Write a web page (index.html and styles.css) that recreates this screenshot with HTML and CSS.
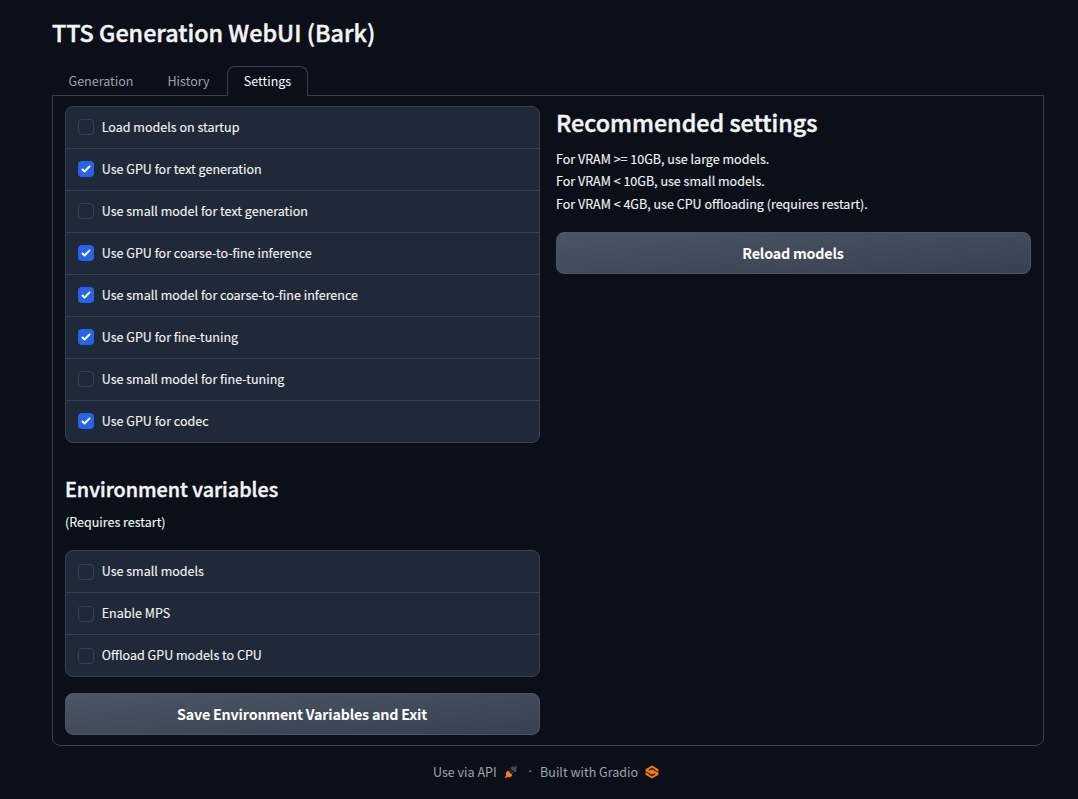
FILE: index.html
```
<!DOCTYPE html>
<html lang="en">
<head>
<meta charset="utf-8">
<title>TTS Generation WebUI (Bark)</title>
<link rel="stylesheet" href="styles.css">
</head>
<body>
<main class="app">
  <h1 class="title">TTS Generation WebUI (Bark)</h1>
  <nav class="tabs">
    <button class="tab tab-generation">Generation</button>
    <button class="tab tab-history">History</button>
    <button class="tab tab-settings selected">Settings</button>
  </nav>
  <section class="panel">
    <div class="column">
      <div class="group models">
        <label class="row"><span class="box"></span><span class="label">Load models on startup</span></label>
        <label class="row"><span class="box checked"><svg viewBox="0 0 16 16"><path d="M12.207 4.793a1 1 0 0 1 0 1.414l-5 5a1 1 0 0 1-1.414 0l-2-2a1 1 0 0 1 1.414-1.414L6.5 9.086l4.293-4.293a1 1 0 0 1 1.414 0z"/></svg></span><span class="label">Use GPU for text generation</span></label>
        <label class="row"><span class="box"></span><span class="label">Use small model for text generation</span></label>
        <label class="row"><span class="box checked"><svg viewBox="0 0 16 16"><path d="M12.207 4.793a1 1 0 0 1 0 1.414l-5 5a1 1 0 0 1-1.414 0l-2-2a1 1 0 0 1 1.414-1.414L6.5 9.086l4.293-4.293a1 1 0 0 1 1.414 0z"/></svg></span><span class="label">Use GPU for coarse-to-fine inference</span></label>
        <label class="row"><span class="box checked"><svg viewBox="0 0 16 16"><path d="M12.207 4.793a1 1 0 0 1 0 1.414l-5 5a1 1 0 0 1-1.414 0l-2-2a1 1 0 0 1 1.414-1.414L6.5 9.086l4.293-4.293a1 1 0 0 1 1.414 0z"/></svg></span><span class="label">Use small model for coarse-to-fine inference</span></label>
        <label class="row"><span class="box checked"><svg viewBox="0 0 16 16"><path d="M12.207 4.793a1 1 0 0 1 0 1.414l-5 5a1 1 0 0 1-1.414 0l-2-2a1 1 0 0 1 1.414-1.414L6.5 9.086l4.293-4.293a1 1 0 0 1 1.414 0z"/></svg></span><span class="label">Use GPU for fine-tuning</span></label>
        <label class="row"><span class="box"></span><span class="label">Use small model for fine-tuning</span></label>
        <label class="row"><span class="box checked"><svg viewBox="0 0 16 16"><path d="M12.207 4.793a1 1 0 0 1 0 1.414l-5 5a1 1 0 0 1-1.414 0l-2-2a1 1 0 0 1 1.414-1.414L6.5 9.086l4.293-4.293a1 1 0 0 1 1.414 0z"/></svg></span><span class="label">Use GPU for codec</span></label>
      </div>
      <div class="env">
        <h2 class="env-title">Environment variables</h2>
        <p class="text">(Requires restart)</p>
      </div>
      <div class="group">
        <label class="row"><span class="box"></span><span class="label">Use small models</span></label>
        <label class="row"><span class="box"></span><span class="label">Enable MPS</span></label>
        <label class="row"><span class="box"></span><span class="label">Offload GPU models to CPU</span></label>
      </div>
      <button class="action">Save Environment Variables and Exit</button>
    </div>
    <div class="column">
      <div class="advice">
        <h1 class="advice-title">Recommended settings</h1>
        <p class="text">For VRAM &gt;= 10GB, use large models.<br>For VRAM &lt; 10GB, use small models.<br>For VRAM &lt; 4GB, use CPU offloading (requires restart).</p>
      </div>
      <button class="action">Reload models</button>
    </div>
  </section>
  <footer class="footer">
    <span>Use via API</span>
    <svg class="icon plug" viewBox="0 0 24 24">
      <path d="M2 22l5-5" stroke="#ff7c00" stroke-width="2.5"/>
      <path d="M6.500 9.500l8 8-2.500 2.500c-2 1.700-5.500 1.500-7-.2S2.500 15 4 12.500z" fill="#ff7c00"/>
      <path d="M11 5.500l7.500 7.500 2-2c1.700-2 1.500-5.500-.2-7S15.500 1.500 13 3.500z" fill="#3f4b5d"/>
      <path d="M9.500 12l3-3M12.500 15l3-3" stroke="#3f4b5d" stroke-width="2"/>
      <path d="M18 6l4-4" stroke="#3f4b5d" stroke-width="2.500"/>
    </svg>
    <span class="dot">·</span>
    <span>Built with Gradio</span>
    <svg class="icon gradio" viewBox="0 0 24 24">
      <path d="M12 1L23 7.200V16.800L12 23 1 16.800V7.200z" fill="#ff7c00"/>
      <path d="M6.500 8.300L12 5.300l5.500 3M6.500 15.700L12 18.700l5.500-3M1 11.300l11 6 5-2.800M23 12.700l-11-6-5 2.800" fill="none" stroke="#0b0f19" stroke-width="1.500"/>
    </svg>
  </footer>
</main>
</body>
</html>
```
FILE: styles.css
```
* { box-sizing: border-box; }
body {
  margin: 0;
  background: #0b0f19;
  color: #f3f4f6;
  font-family: "Noto Sans CJK SC", "Open Sans", sans-serif;
  font-size: 12.53px;
  line-height: 21px;
}
h1, h2, p { margin: 0; }
h1, h2 { font-weight: 500; -webkit-text-stroke: 0.45px currentColor; }
button { font-family: inherit; margin: 0; }
.app {
  width: 992px;
  height: 799px;
  margin-left: 52px;
  padding-top: 13px;
  display: flex;
  flex-direction: column;
}
.title { font-size: 23.33px; line-height: 38px; }
.tabs { display: flex; margin-top: 15px; height: 30px; }
.tab {
  height: 30px;
  padding: 0 16px 2px 15px;
  border: 1px solid transparent;
  border-bottom: 0;
  border-radius: 8px 8px 0 0;
  background: transparent;
  color: #9ca3af;
  font-size: 12.53px;
  line-height: 27px;
}
.tab-generation { width: 99px; }
.tab-history { width: 76px; }
.tab-settings { width: 81px; }
.selected {
  padding-right: 15px;
  background: #0b0f19;
  border-color: #374151;
  color: #fff;
  position: relative;
}
.panel {
  display: flex;
  gap: 16px;
  height: 651px;
  margin-top: -1px;
  padding: 10px 12px;
  border: 1px solid #374151;
  border-radius: 0 0 8px 8px;
}
.column { flex: 1; display: flex; flex-direction: column; }
.group {
  display: flex;
  flex-direction: column;
  gap: 1px;
  border: 1px solid #374151;
  border-radius: 8px;
  background: #374151;
  overflow: hidden;
}
.row {
  display: flex;
  align-items: center;
  gap: 7.7px;
  height: 41px;
  padding-left: 12px;
  background: #1f2937;
}
.models .row { padding-bottom: 2px; }
.label { padding-bottom: 2px; -webkit-text-stroke: 0.12px currentColor; }
.models .label { padding-bottom: 0; }
.box {
  display: flex;
  width: 16px;
  height: 16px;
  border: 1px solid #374151;
  border-radius: 4px;
}
.checked { border: 0; background: #2563eb; }
.checked svg { width: 16px; height: 16px; fill: #fff; }
.env { height: 107px; padding-top: 29px; }
.env-title { font-size: 19.75px; line-height: 34px; }
.env .text { margin-top: 5px; }
.text { line-height: 22.4px; -webkit-text-stroke: 0.12px currentColor; }
.advice { height: 126px; }
.advice-title { font-size: 23.3px; line-height: 32px; }
.advice .text { margin-top: 10px; }
.action {
  height: 42px;
  padding: 0 1px 2px 0;
  border: 1px solid #4b5563;
  border-radius: 8px;
  background: linear-gradient(to bottom right, #4b5563, #374151);
  color: #fff;
  font-size: 14.3px;
  font-weight: 700;
  letter-spacing: -0.2px;
}
.group + .action { margin-top: 16px; }
.footer {
  display: flex;
  align-items: center;
  margin: 15px 0 0 381px;
  color: #9ca3af;
}
.icon { width: 14px; height: 14px; margin-left: 7px; }
.dot { width: 4px; margin: 0 7.5px 0 11px; font-family: "Open Sans", sans-serif; }
```
